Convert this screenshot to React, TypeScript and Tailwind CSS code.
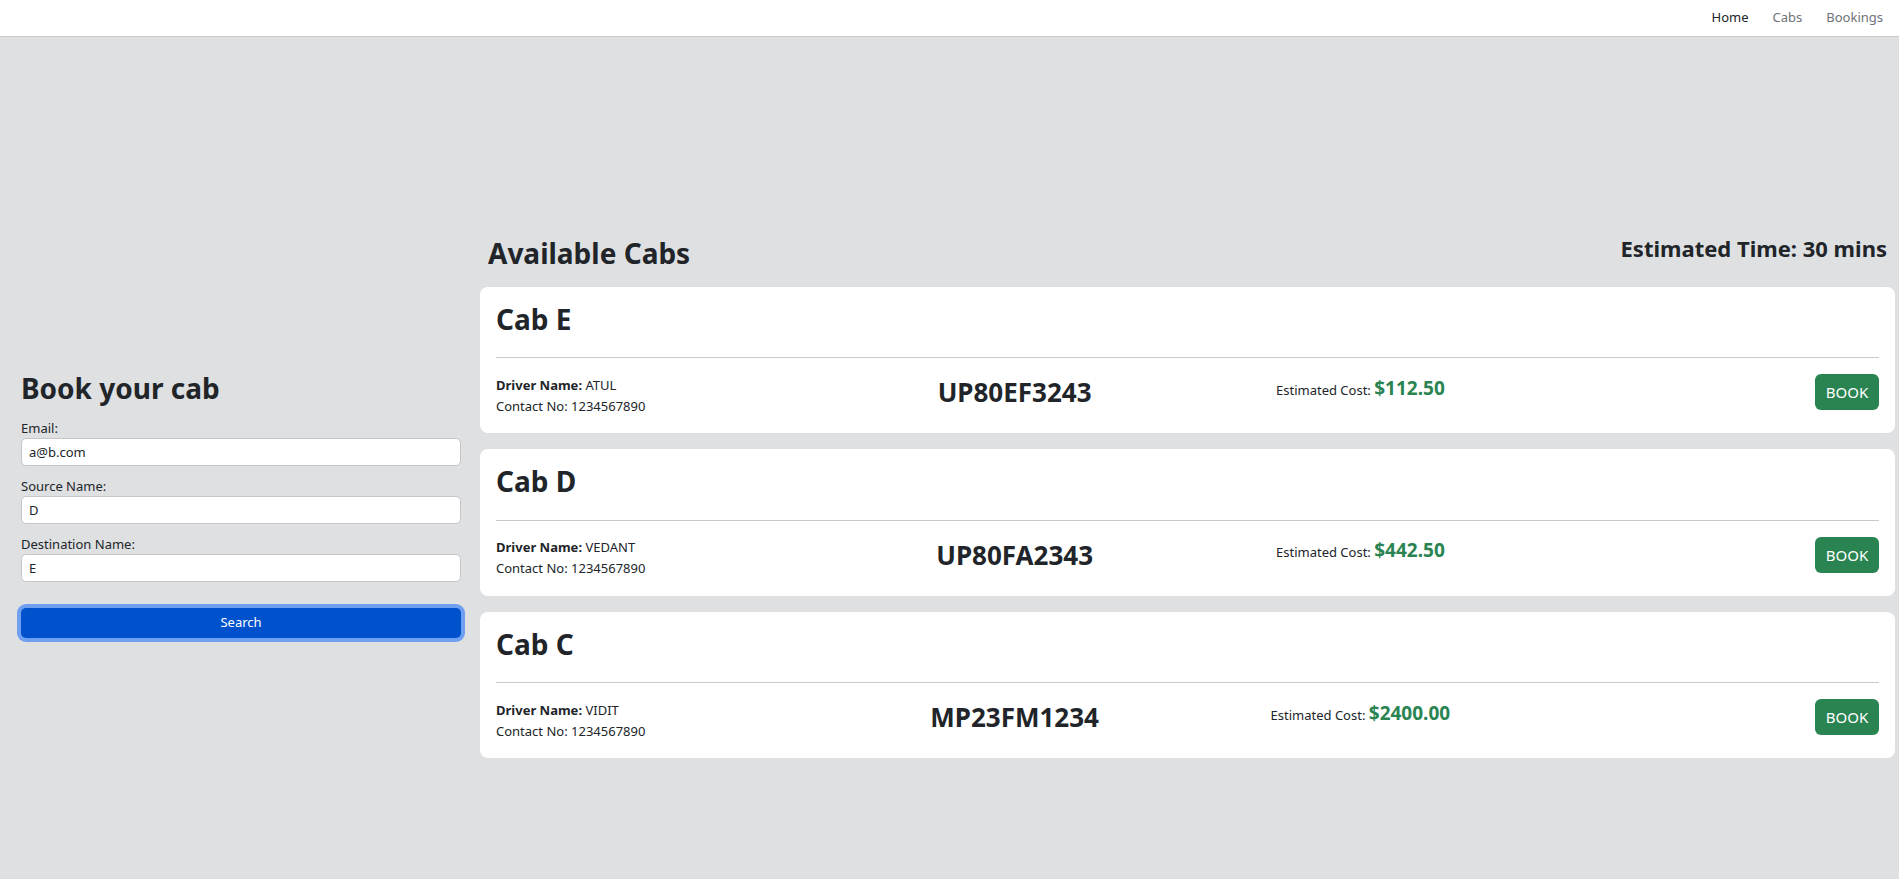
import React from "react";

const cabs = [
  { name: "Cab E", driver: "ATUL", contact: "1234567890", plate: "UP80EF3243", cost: "$112.50" },
  { name: "Cab D", driver: "VEDANT", contact: "1234567890", plate: "UP80FA2343", cost: "$442.50" },
  { name: "Cab C", driver: "VIDIT", contact: "1234567890", plate: "MP23FM1234", cost: "$2400.00" },
];

function Field({ label, value }: { label: string; value: string }) {
  return (
    <div className="mb-[10px]">
      <label className="block text-[13px] leading-[20px] text-[#212529]">{label}</label>
      <input
        readOnly
        value={value}
        className="block w-full h-[28px] bg-white border border-[#c4c6c9] rounded-[5px] px-[7px] text-[13px] text-[#212529] outline-none"
      />
    </div>
  );
}

export default function App() {
  return (
    <div
      className="min-h-screen bg-[#dee0e2] text-[#212529]"
      style={{ fontFamily: '"Noto Sans", "Open Sans", sans-serif' }}
    >
      <nav className="h-[37px] bg-white border-b border-[#c8c9cb] flex items-center justify-end pr-[4px] text-[13px]">
        <a className="px-3 text-[#212529]">Home</a>
        <a className="px-3 text-[#6d7277]">Cabs</a>
        <a className="px-3 text-[#6d7277]">Bookings</a>
      </nav>
      <div className="flex items-start">
        <div className="w-[476px] shrink-0 pl-[21px] pr-[15px] pt-[335px]">
          <h3 className="text-[28px] font-bold leading-[1.2] mb-[12px]">Book your cab</h3>
          <Field label="Email:" value="a@b.com" />
          <Field label="Source Name:" value="D" />
          <Field label="Destination Name:" value="E" />
          <button className="mt-[16px] w-full h-[30px] rounded-[5px] bg-[#0052cc] text-white text-[13px] ring-[4px] ring-[#6e9ff0]">
            Search
          </button>
        </div>
        <div className="flex-1 pl-[4px] pr-[4px] pt-[197px]">
          <div className="flex items-start justify-between px-2 mb-[16px]">
            <h2 className="mt-[3px] text-[28px] font-bold leading-[1.2]">Available Cabs</h2>
            <h4 className="mt-[1px] text-[22px] font-bold leading-[1.2]">Estimated Time: 30 mins</h4>
          </div>
          <div className="flex flex-col gap-4">
            {cabs.map((c) => (
              <div key={c.name} className="bg-white rounded-[8px] p-4">
                <h3 className="text-[28px] font-bold leading-[1.2]">{c.name}</h3>
                <hr className="mt-[21px] mb-[16px] border-0 border-t border-[#c8c9cb]" />
                <div className="grid grid-cols-4 items-center">
                  <div className="text-[13px] leading-[21px]">
                    <div>
                      <span className="font-bold">Driver Name:</span> {c.driver}
                    </div>
                    <div>Contact No: {c.contact}</div>
                  </div>
                  <div className="text-center pb-[6px]">
                    <span className="text-[26px] font-bold leading-[1.2]">{c.plate}</span>
                  </div>
                  <div className="text-center pb-[14px] leading-[24px]">
                    <span className="text-[13px]">Estimated Cost: </span>
                    <span className="text-[19px] font-bold text-[#2a8452]">{c.cost}</span>
                  </div>
                  <div className="flex justify-end pb-[7px]">
                    <button className="w-[64px] h-[36px] rounded-[6px] bg-[#2a8452] text-white text-[15px]">
                      BOOK
                    </button>
                  </div>
                </div>
              </div>
            ))}
          </div>
        </div>
      </div>
    </div>
  );
}
